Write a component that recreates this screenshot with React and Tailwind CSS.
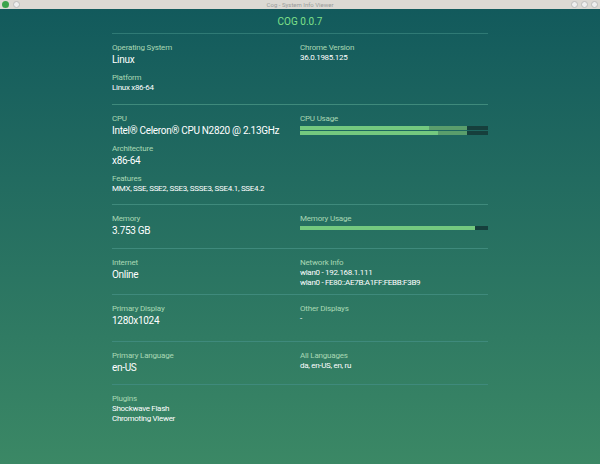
const F = { fontFamily: "Roboto, 'Liberation Sans', sans-serif" };
const L = ({ children }) => <div className="text-[8px] leading-[10px] text-[#a9d8b4] tracking-[-0.2px]">{children}</div>;
const V = ({ children, big }) => <div className={(big ? "text-[10px] leading-[12px] mt-[1px]" : "text-[8px] leading-[10px]") + " text-white tracking-[-0.3px]"}>{children}</div>;
const Item = ({ l, v, big, cls = "" }) => <div className={cls}><L>{l}</L>{Array.isArray(v) ? v.map((x) => <V key={x}>{x}</V>) : <V big={big}>{v}</V>}</div>;
const Bar = ({ a, b }) => (
  <div className="flex h-[4px] w-full">
    <div className="bg-[#74c97f]" style={{ width: a + "%" }} />
    <div className="bg-[#5a9e6c]" style={{ width: b + "%" }} />
    <div className="bg-[#163f3c] flex-1" />
  </div>
);
const Sec = ({ h, left, right }) => (
  <div className="border-t border-[#3f8a7c] flex" style={{ height: h }}>
    <div className="w-[188px] pt-[9px] flex flex-col gap-[7px]">{left}</div>
    <div className="flex-1 pt-[9px]">{right}</div>
  </div>
);
export default function App() {
  return (
    <div style={F} className="w-[600px] h-[464px] flex flex-col overflow-hidden">
      <div className="h-[9px] bg-[#dcd9d3] flex items-center px-[2px] relative">
        <div className="w-[7px] h-[7px] rounded-full bg-[#3aa34a]" />
        <div className="w-[7px] h-[7px] rounded-full bg-[#eee] border border-[#bbb] ml-[4px]" />
        <div className="absolute inset-x-0 text-center text-[6px] text-[#999]">Cog - System Info Viewer</div>
        <div className="ml-auto flex gap-[3px]">
          {[0, 1, 2].map((i) => <div key={i} className="w-[7px] h-[7px] rounded-full bg-[#eee] border border-[#bbb]" />)}
        </div>
      </div>
      <div className="flex-1 bg-gradient-to-b from-[#125a5c] to-[#3b8865]">
        <div className="w-[376px] mx-auto">
          <div className="h-[24px] flex items-center justify-center text-[10px] text-[#7fe08a]">COG 0.0.7</div>
          <div className="border-t border-[#2f7a75]" />
          <div className="flex h-[70px]">
            <div className="w-[188px] pt-[9px] flex flex-col gap-[7px]"><Item l="Operating System" v="Linux" big /><Item l="Platform" v="Linux x86-64" /></div>
            <div className="flex-1 pt-[9px]"><Item l="Chrome Version" v="36.0.1985.125" /></div>
          </div>
          <Sec h={100} left={<><Item l="CPU" v="Intel® Celeron® CPU N2820 @ 2.13GHz" big /><Item l="Architecture" v="x86-64" big /><Item l="Features" v="MMX, SSE, SSE2, SSE3, SSSE3, SSE4.1, SSE4.2" /></>}
            right={<><L>CPU Usage</L><div className="mt-[2px] flex flex-col gap-[1px]"><Bar a={68.8} b={20} /><Bar a={73.6} b={15} /></div></>} />
          <Sec h={44} left={<Item l="Memory" v="3.753 GB" big />} right={<><L>Memory Usage</L><div className="mt-[2px]"><Bar a={93} b={0} /></div></>} />
          <Sec h={46} left={<Item l="Internet" v="Online" big />} right={<Item l="Network Info" v={["wlan0 - 192.168.1.111", "wlan0 - FE80::AE7B:A1FF:FEBB:F3B9"]} />} />
          <Sec h={47} left={<Item l="Primary Display" v="1280x1024" big />} right={<Item l="Other Displays" v="-" />} />
          <Sec h={43} left={<Item l="Primary Language" v="en-US" big />} right={<Item l="All Languages" v="da, en-US, en, ru" />} />
          <Sec h={60} left={<Item l="Plugins" v={["Shockwave Flash", "Chromoting Viewer"]} />} right={null} />
        </div>
      </div>
    </div>
  );
}
